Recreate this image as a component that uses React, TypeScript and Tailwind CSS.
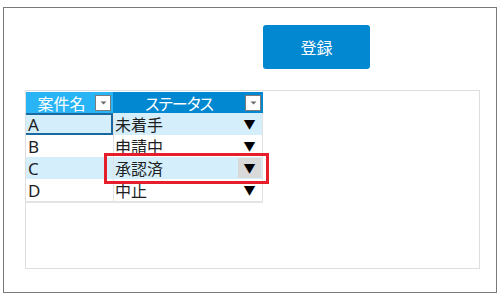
import React from "react";

const rows = [
  { name: "A", status: "未着手", bg: "bg-[#d4effb]", sel: true },
  { name: "B", status: "申請中", bg: "bg-white" },
  { name: "C", status: "承認済", bg: "bg-[#d4effb]", btn: true },
  { name: "D", status: "中止", bg: "bg-white" },
];

function FilterBox() {
  return (
    <div className="w-[16px] h-[16px] bg-white border border-[#7c7c7c] flex items-center justify-center">
      <svg width="7" height="4" viewBox="0 0 7 4">
        <path d="M0.5 0.5 L6.5 0.5 L3.5 3.5 Z" fill="#6b6b6b" />
      </svg>
    </div>
  );
}

export default function App() {
  return (
    <div
      className="w-[500px] h-[300px] bg-white pt-[7px] px-[3px] [font-feature-settings:'palt'] text-[#1e1e1e]"
      style={{ fontFamily: '"Noto Sans", "Noto Sans CJK JP", sans-serif' }}
    >
      <div className="h-[286px] border border-[#7a7a7a] flex flex-col">
        <div className="ml-[259px] mt-[17px] w-[107px] h-[44px] rounded-[3px] bg-[#0288d1] text-white text-[16px] leading-none flex items-center justify-center [font-family:'Noto_Sans_CJK_JP',sans-serif]">
          登録
        </div>
        <div className="relative ml-[21px] mt-[21px] w-[455px] h-[179px] border border-[#dedede] pt-px [font-family:'Noto_Sans_CJK_JP',sans-serif]">
          <div className="w-[237px] flex flex-col">
            <div className="flex h-[21px] text-white text-[16px] leading-none">
              <div className="w-[87px] bg-[#29b5f5] flex items-center pl-[2px] pr-[2px]">
                <div className="flex-1 text-center">案件名</div>
                <FilterBox />
              </div>
              <div className="w-[150px] bg-[#0288d1] flex items-center pr-[2px]">
                <div className="flex-1 text-center tracking-[-1px]">ステータス</div>
                <FilterBox />
              </div>
            </div>
            {rows.map((r) => (
              <div key={r.name} className={`flex h-[22px] text-[16px] leading-none ${r.bg}`}>
                <div
                  className={`w-[87px] flex items-center pl-[2px] text-[17px] [font-family:'Noto_Sans',sans-serif] ${
                    r.sel ? "border-t-2 border-r-2 border-b-2 border-[#1a6aa1]" : ""
                  }`}
                >
                  {r.name}
                </div>
                <div className="w-[150px] border-l border-r border-[#e2e2e2] flex items-center pl-[1px] pr-[1px]">
                  <div className="flex-1">{r.status}</div>
                  <div
                    className={`w-[23px] h-[20px] flex items-center justify-center text-[12px] text-black ${
                      r.btn ? "bg-[#d9d9d9]" : ""
                    }`}
                  >
                    ▼
                  </div>
                </div>
              </div>
            ))}
            <div className="h-[2px] bg-[#e4e4e4]" />
          </div>
          <div className="absolute left-[78px] top-[62px] w-[165px] h-[31px] border-[3px] border-[#e61e2b]" />
        </div>
      </div>
    </div>
  );
}
